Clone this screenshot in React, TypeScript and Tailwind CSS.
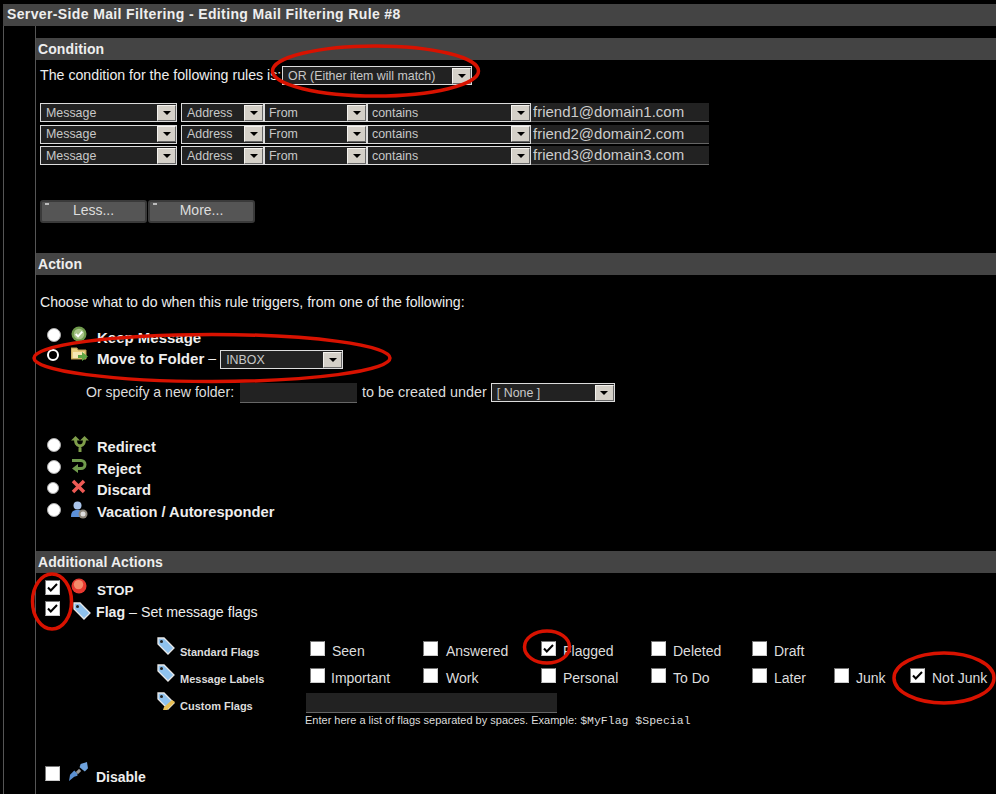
import React from "react";

function Arrow() {
  return (
    <span className="w-[19px] h-[16px] shrink-0 bg-[#d4d0c8] border border-t-[#f4f2ee] border-l-[#f4f2ee] border-r-[#666] border-b-[#666] flex items-center justify-center">
      <svg width="8" height="4" viewBox="0 0 8 4"><path d="M0 0h8L4 4z" fill="#000" /></svg>
    </span>
  );
}

function Select({ label, className = "", pad = "pl-[5px]" }: { label: string; className?: string; pad?: string }) {
  return (
    <div className={`h-[19px] border border-[#dcdcdc] bg-[#222] flex items-center justify-between pr-[0px] text-[#c8c8c8] text-[12.400px] font-normal leading-none ${pad} ${className}`}>
      <span className="whitespace-nowrap pt-[1px]">{label}</span>
      <Arrow />
    </div>
  );
}

function Rule({ email }: { email: string }) {
  return (
    <div className="flex h-[19px]">
      <Select label="Message" className="w-[137px] mr-[4px]" />
      <Select label="Address" className="w-[83px]" />
      <Select label="From" className="w-[103px]" pad="pl-[4px]" />
      <Select label="contains" className="w-[164px]" pad="pl-[4px]" />
      <div className="w-[178px] h-[19px] bg-[#222] border-b border-[#666] pl-[2px] text-[15px] leading-[18px] text-[#ccc] whitespace-nowrap">{email}</div>
    </div>
  );
}

function Header({ title }: { title: string }) {
  return <div className="h-[22px] bg-[#444] pl-[2px] text-[14px] leading-[22px] font-bold text-[#eee] tracking-[0.1px]">{title}</div>;
}

function Btn({ label }: { label: string }) {
  return (
    <div className="relative w-[107px] h-[23px] rounded-[3px] border-2 border-[#3a3a3a] bg-[#555] text-center text-[14px] leading-[17px] text-[#ddd]">
      <span className="absolute left-[3px] top-[1px] w-[4px] h-[2px] bg-[#bbb]" />
      {label}
    </div>
  );
}

function Radio({ on = false, small = false }: { on?: boolean; small?: boolean }) {
  if (on) return <span className="w-[12px] h-[12px] rounded-full border-2 border-white bg-black block shrink-0" />;
  return <span className={`${small ? "w-[12px] h-[12px] mt-[1px]" : "w-[14px] h-[14px]"} rounded-full border border-[#aaa] bg-white block shrink-0`} />;
}

function Check({ on = false }: { on?: boolean }) {
  return (
    <span className="w-[15px] h-[15px] bg-white border border-t-[#777] border-l-[#777] border-r-[#ccc] border-b-[#ccc] flex items-center justify-center shrink-0">
      {on && (
        <svg width="11" height="9" viewBox="0 0 11 9"><path d="M1 4.500l2.800 3L10 1" fill="none" stroke="#000" strokeWidth="2" /></svg>
      )}
    </span>
  );
}

function IconCheck() {
  return (
    <svg width="16" height="16" viewBox="0 0 17 17"><circle cx="8.500" cy="8.500" r="8" fill="#6f9a4c" /><circle cx="8.500" cy="8.500" r="5.500" fill="#a9c58a" /><path d="M5 8.500l2.500 2.500L12 6" fill="none" stroke="#fff" strokeWidth="2" /></svg>
  );
}
function IconFolder() {
  return (
    <svg width="18" height="16" viewBox="0 0 18 16"><path d="M0 1h6l1 2h8v9H0z" fill="#e8cc7c" stroke="#b59a4e" /><path d="M2 5h11v6H2z" fill="#f6e7b4" /><path d="M7 8h4V5l6 4.500-6 4.500v-3H7z" fill="#5fa544" /></svg>
  );
}
function IconRedirect() {
  return (
    <svg width="18" height="17" viewBox="0 0 18 17"><path d="M9 16V10M9 10C5 9 4.500 7 4.500 3M9 10c4-1 4.500-3 4.500-7" fill="none" stroke="#7f9e4a" strokeWidth="3" /><path d="M0 4.500L4.500 0 9 4.500zM9 4.500L13.500 0 18 4.500z" fill="#7f9e4a" /></svg>
  );
}
function IconReject() {
  return (
    <svg width="16" height="16" viewBox="0 0 16 16"><path d="M1 2.500h9a4 4 0 0 1 0 8H6" fill="none" stroke="#6f9a4c" strokeWidth="3" /><path d="M7 6v9L1 10.500z" fill="#6f9a4c" /></svg>
  );
}
function IconX() {
  return (
    <svg width="15" height="15" viewBox="0 0 15 15"><path d="M2 2l11 11M13 2L2 13" stroke="#ee5a55" strokeWidth="3.500" /></svg>
  );
}
function IconUser() {
  return (
    <svg width="17" height="18" viewBox="0 0 17 18"><circle cx="6.500" cy="4.500" r="4" fill="#a9c4ea" /><path d="M0 16c0-6 2.500-7 6.500-7s6.500 1 6.500 7z" fill="#5b8fd8" /><circle cx="12" cy="13" r="4.500" fill="#8d867a" /><circle cx="12" cy="13" r="2.500" fill="#ddd" /></svg>
  );
}
function IconStop() {
  return (
    <svg width="16" height="16" viewBox="0 0 17 17"><circle cx="8.500" cy="8.500" r="8" fill="#e8382f" /><circle cx="8" cy="7" r="5" fill="#f58a6a" /></svg>
  );
}
function IconTag({ pencil = false }: { pencil?: boolean }) {
  return (
    <svg width="18" height="18" viewBox="0 0 18 18">
      <path d="M1 1h6l10 10-6 6L1 7z" fill="#8fc2ee" stroke="#e8e8e8" strokeWidth="1.300" />
      <circle cx="4.500" cy="4.500" r="1.500" fill="#222" />
      {pencil && <path d="M15 8l3 2-8 8-4 0 1-3z" fill="#e8bf55" />}
    </svg>
  );
}
function IconPlug() {
  return (
    <svg width="19" height="19" viewBox="0 0 18 18"><path d="M10 5l1-3 6-2 1 6-3 3z" fill="#6ea2dc" /><path d="M8 13l-3 1-5 4 1-6 4-4 3 3z" fill="#5b8fd0" /><path d="M6.500 9.500l3-3 2 2-3 3z" fill="#999" /></svg>
  );
}

function ActionRow({ h, icon, children, on, small, text = "text-[14.700px]" }: { h: string; icon: React.ReactNode; children: React.ReactNode; on?: boolean; small?: boolean; text?: string }) {
  return (
    <div className={`flex ${h}`}>
      <span className="w-[27px] pl-[7px]"><Radio on={on} small={small} /></span>
      <span className="w-[30px] pl-[4px] -mt-[2px]">{icon}</span>
      <span className={`pt-[1px] leading-[17px] font-bold text-[#eee] whitespace-nowrap flex items-start ${text}`}>{children}</span>
    </div>
  );
}

function FlagLabel({ icon, label, top }: { icon: React.ReactNode; label: string; top: string }) {
  return (
    <div className="w-[153px] flex items-start">
      <span className={`w-[23px] ${top}`}>{icon}</span>
      <span className="text-[11px] leading-[13px] pt-[9px] font-bold text-[#ddd] whitespace-nowrap">{label}</span>
    </div>
  );
}

function Flag({ w, label, on, gap = "w-[22px]" }: { w: string; label: string; on?: boolean; gap?: string }) {
  return (
    <div className={`flex items-start pt-[4px] ${w}`}>
      <span className={gap}><Check on={on} /></span>
      <span className="text-[14px] leading-[17px] pt-[2px] text-[#ddd] whitespace-nowrap">{label}</span>
    </div>
  );
}

export default function App() {
  return (
    <div className="relative w-[996px] h-[794px] overflow-hidden bg-black pt-[4px] pl-[3px] font-['Liberation_Sans',Arial,sans-serif] text-[#eee]">
      <div className="h-[22px] bg-[#444] pl-[4px] text-[14px] leading-[20px] font-bold text-[#eee] tracking-[0.37px]">
        Server-Side Mail Filtering - Editing Mail Filtering Rule #8
      </div>
      <div className="h-[768px] border-l border-[#555] pl-[31px]">
        <div className="h-[768px] border-l border-[#555] pt-[12px]">
          <Header title="Condition" />
          <div className="h-[193px] px-[4px] pt-[6px]">
            <div className="flex h-[19px] text-[14.200px] leading-[19px] text-[#eee]">
              <span className="w-[242px] whitespace-nowrap">The condition for the following rules is:</span>
              <Select label="OR (Either item will match)" className="w-[190px]" />
            </div>
            <div className="mt-[18px] flex flex-col gap-[2.500px]">
              <Rule email="friend1@domain1.com" />
              <Rule email="friend2@domain2.com" />
              <Rule email="friend3@domain3.com" />
            </div>
            <div className="mt-[35px] flex gap-[1px]">
              <Btn label="Less..." />
              <Btn label="More..." />
            </div>
          </div>

          <Header title="Action" />
          <div className="h-[276px] px-[4px]">
            <div className="pt-[19px] h-[53px] text-[14.100px] leading-[17px] text-[#eee] whitespace-nowrap">
              Choose what to do when this rule triggers, from one of the following:
            </div>
            <ActionRow h="h-[21px]" icon={<IconCheck />} text="text-[15px]">Keep Message</ActionRow>
            <ActionRow h="h-[25px]" icon={<IconFolder />} on text="text-[15.100px]">
              Move to Folder
              <span className="font-normal text-[14px] px-[4px]">–</span>
              <Select label="INBOX" className="w-[123px]" />
            </ActionRow>
            <div className="flex items-start h-[64px] pl-[46px] pt-[9px] text-[14.100px] leading-[17px] text-[#ddd]">
              <span className="pt-[1px] whitespace-nowrap">Or specify a new folder:</span>
              <div className="ml-[6px] w-[117px] h-[20px] bg-[#222] border-b border-[#666]" />
              <span className="pt-[1px] ml-[5px] text-[14.400px] whitespace-nowrap">to be created under</span>
              <Select label="[ None ]" className="w-[124px] ml-[4px]" />
            </div>
            <ActionRow h="h-[22px]" icon={<IconRedirect />}>Redirect</ActionRow>
            <ActionRow h="h-[21px]" icon={<IconReject />}>Reject</ActionRow>
            <ActionRow h="h-[22px]" icon={<IconX />} small>Discard</ActionRow>
            <ActionRow h="h-[22px]" icon={<IconUser />}>Vacation / Autoresponder</ActionRow>
          </div>

          <Header title="Additional Actions" />
          <div className="px-[4px] pt-[7px]">
            <div className="flex h-[21px] pl-[5px]">
              <span className="w-[26px]"><Check on /></span>
              <span className="w-[26px] -mt-[2px]"><IconStop /></span>
              <span className="pt-[2px] text-[13.500px] leading-[17px] font-bold whitespace-nowrap">STOP</span>
            </div>
            <div className="flex h-[36px] pl-[5px]">
              <span className="w-[26px]"><Check on /></span>
              <span className="w-[25px] pl-[2px] pt-[1px]"><IconTag /></span>
              <span className="pt-[3px] text-[14.200px] leading-[17px] whitespace-nowrap"><b>Flag</b> – Set message flags</span>
            </div>
            <div className="flex h-[27px] pl-[117px]">
              <FlagLabel icon={<IconTag />} label="Standard Flags" top="mt-[0px]" />
              <Flag w="w-[113px]" label="Seen" />
              <Flag w="w-[118px]" gap="w-[23px]" label="Answered" />
              <Flag w="w-[110px]" label="Flagged" on />
              <Flag w="w-[101px]" label="Deleted" />
              <Flag w="w-[82px]" label="Draft" />
            </div>
            <div className="flex h-[27px] pl-[117px]">
              <FlagLabel icon={<IconTag />} label="Message Labels" top="mt-[0px]" />
              <Flag w="w-[113px]" gap="w-[21px]" label="Important" />
              <Flag w="w-[118px]" gap="w-[23px]" label="Work" />
              <Flag w="w-[110px]" label="Personal" />
              <Flag w="w-[101px]" label="To Do" />
              <Flag w="w-[82px]" label="Later" />
              <Flag w="w-[76px]" label="Junk" />
              <Flag w="w-[80px]" label="Not Junk" on />
            </div>
            <div className="flex h-[28px] pl-[117px]">
              <FlagLabel icon={<IconTag pencil />} label="Custom Flags" top="mt-[1px]" />
              <div className="mt-[2px] -ml-[4px]">
                <div className="w-[251px] h-[20px] bg-[#222] border-b border-[#666]" />
              </div>
            </div>
            <div className="-mt-[5px] h-[52px] pl-[265px] text-[11px] leading-[13px] text-[#ddd] whitespace-nowrap">
              Enter here a list of flags separated by spaces. Example: <span className="font-['Liberation_Mono',monospace] text-[11.500px]">$MyFlag $Special</span>
            </div>
            <div className="flex h-[21px] pl-[5px]">
              <span className="w-[24px]"><Check /></span>
              <span className="w-[27px] -mt-[4px]"><IconPlug /></span>
              <span className="pt-[3px] text-[14px] leading-[17px] font-bold whitespace-nowrap">Disable</span>
            </div>
          </div>
        </div>
      </div>

      <svg className="absolute left-0 top-0 pointer-events-none" width="996" height="794" viewBox="0 0 996 794" fill="none" stroke="#d81200" strokeWidth="3.500">
        <ellipse cx="375.500" cy="71" rx="103" ry="25" />
        <ellipse cx="212" cy="358" rx="178" ry="23.500" />
        <ellipse cx="52" cy="601.500" rx="19.500" ry="27.500" />
        <ellipse cx="547" cy="647" rx="22.500" ry="16" />
        <ellipse cx="944" cy="678" rx="50" ry="25" />
      </svg>
    </div>
  );
}
